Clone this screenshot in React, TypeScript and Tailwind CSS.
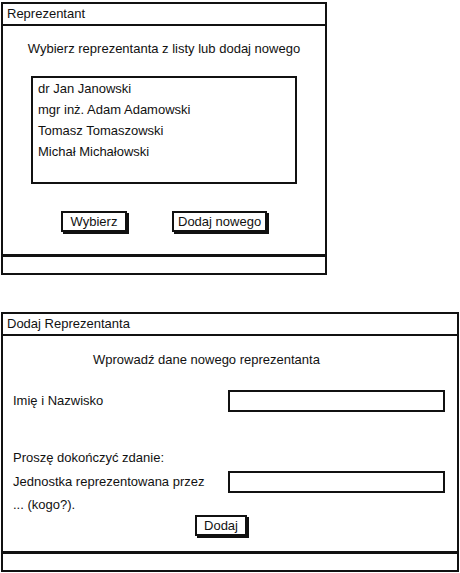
import React from "react";

const PEOPLE = [
  "dr Jan Janowski",
  "mgr inż. Adam Adamowski",
  "Tomasz Tomaszowski",
  "Michał Michałowski",
];

const SketchButton = ({ label, className = "" }: { label: string; className?: string }) => (
  <button
    className={`h-[21px] whitespace-nowrap border-2 border-[#111] bg-white px-[4px] text-[13px] leading-[17px] text-[#111] shadow-[2px_2px_0_#111] ${className}`}
  >
    {label}
  </button>
);

const Window = ({
  title,
  className,
  children,
}: {
  title: string;
  className: string;
  children: React.ReactNode;
}) => (
  <div className={`flex flex-col border-2 border-[#111] bg-white ${className}`}>
    <div className="h-[22px] border-b-2 border-[#111] pl-[4px] text-[13px] leading-[20px]">{title}</div>
    <div className="flex-1">{children}</div>
    <div className="h-[19px] border-t-[3px] border-[#111]" />
  </div>
);

const App = () => {
  return (
    <div className="min-h-[573px] w-[460px] bg-white font-['Liberation_Sans',Arial,sans-serif] text-[#111]">
      <div className="pt-[2px] pl-[1px]">
        <Window title="Reprezentant" className="h-[273px] w-[326px]">
          <p className="mt-[15px] text-center text-[13px] leading-[16px]">
            Wybierz reprezentanta z listy lub dodaj nowego
          </p>
          <ul className="mx-auto mt-[19px] h-[108px] w-[266px] border-2 border-[#111] px-[5px]">
            {PEOPLE.map((p) => (
              <li key={p} className="text-[13px] leading-[21px]">
                {p}
              </li>
            ))}
          </ul>
          <div className="mt-[27px] flex justify-center gap-[45px]">
            <SketchButton label="Wybierz" className="w-[66px]" />
            <SketchButton label="Dodaj nowego" className="w-[95px]" />
          </div>
        </Window>
      </div>

      <div className="pt-[37px] pl-[1px]">
        <Window title="Dodaj Reprezentanta" className="h-[260px] w-[458px]">
          <p className="mt-[16px] pl-[90px] text-[13px] leading-[16px]">Wprowadź dane nowego reprezentanta</p>
          <div className="mt-[22px] flex h-[22px] items-center justify-between pr-[12px] pl-[10px]">
            <span className="text-[13px]">Imię i Nazwisko</span>
            <div className="h-[22px] w-[217px] border-2 border-[#111]" />
          </div>
          <p className="mt-[38px] pl-[10px] text-[13px] leading-[16px]">Proszę dokończyć zdanie:</p>
          <div className="mt-[5px] flex h-[22px] items-center justify-between pr-[12px] pl-[10px]">
            <span className="text-[13px]">Jednostka reprezentowana przez</span>
            <div className="h-[22px] w-[217px] border-2 border-[#111]" />
          </div>
          <p className="mt-[4px] pl-[10px] text-[13px] leading-[16px]">... (kogo?).</p>
          <div className="pl-[192px]">
            <SketchButton label="Dodaj" className="w-[52px]" />
          </div>
        </Window>
      </div>
    </div>
  );
};

export default App;
